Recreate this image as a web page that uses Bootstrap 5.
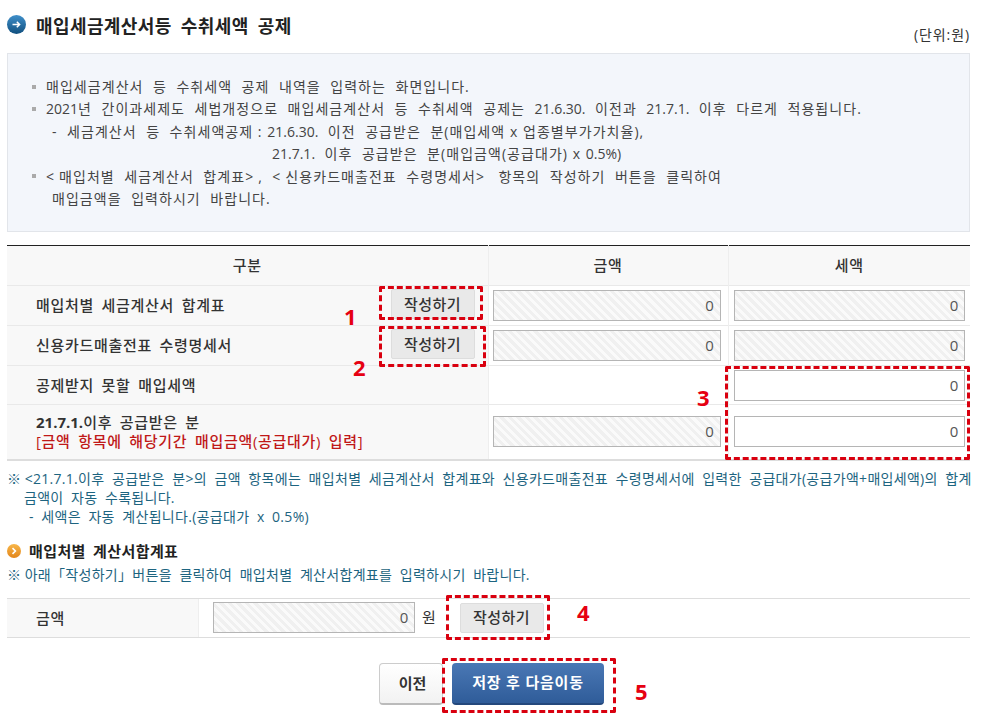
<!DOCTYPE html>
<html lang="ko">
<head>
<meta charset="utf-8">
<title>매입세금계산서등 수취세액 공제</title>
<link href="https://cdn.jsdelivr.net/npm/bootstrap@5.3.0/dist/css/bootstrap.min.css" rel="stylesheet">
<style>
html,body{height:724px;overflow:hidden}
body{font-family:"Open Sans","Noto Sans CJK KR","Liberation Sans",sans-serif;font-size:15px;letter-spacing:.7px;word-spacing:3px;color:#333;background:#fff}
.pg{position:relative;width:963px;margin-left:7px;height:724px}
.ttl-row{height:53px;padding-top:15px}
.ttl{font-size:18px;font-weight:700;color:#222;line-height:22px;margin:0 0 0 10px;letter-spacing:.4px;word-spacing:4px}
.unit{font-size:14px;line-height:18px;padding-top:11px;letter-spacing:.9px}
.infobox{height:179px;background:#f3f6fb;border:1px solid #e2e5ea;padding:22px 0 0 24px;line-height:22.4px;color:#444;font-size:14px;letter-spacing:1.05px;word-spacing:4.8px}
.infoline{white-space:nowrap}
.ind1{padding-left:20px}
.ind2{padding-left:240px}
.ind3{padding-left:20px}
.ang{letter-spacing:5px}
.ltn{letter-spacing:0}
.tsp{word-spacing:0}
.sq{display:inline-block;width:4px;height:4px;background:#aaa;margin:0 10px 3px 0;vertical-align:middle}
.gtbl{width:963px;table-layout:fixed;margin-top:13px;border-collapse:collapse;border-top:1px solid #222;border-bottom:2px solid #ddd}
.gtbl th{height:40px;background:#f8f8f8;font-weight:500;text-align:center;color:#333;border-left:1px solid #eee}
.gtbl th:first-child,.gtbl td:first-child{border-left:0}
.gtbl td{border-top:1px solid #e9e9e9;border-left:1px solid #eee;padding:0 5px 0 5px;height:40px}
.gtbl td:nth-child(2){padding:0 7px 0 4px}
.gtbl td.lb{background:#f8f8f8;padding-left:29px;line-height:19px;font-weight:500;color:#333}
.gtbl td.lbw{background:#fff}
.r1 td{height:39px}
.r2 td{height:55px}
.wb{font-weight:700;letter-spacing:0}
.redt{color:#c01818;font-weight:500}
.amt{display:block;height:31px;width:100%;border:1px solid #b5b5b5;text-align:right;padding:0 5px 0 0;line-height:29px;color:#555;background:#fff;border-radius:0}
.hatch{background:repeating-linear-gradient(45deg,#f0f0f0 0,#f0f0f0 3px,#fafafa 3px,#fafafa 6px)}
.wr-btn{width:84px;height:30px;background:#e9e9e9;border:1px solid #ddd;border-radius:2px;font-size:15px;letter-spacing:.4px;color:#333;padding:0;line-height:27px;font-weight:500}
.cellbtn{display:flex;justify-content:flex-end;margin-top:-3px}
.teal{color:#1d6480;font-size:14px;line-height:19px;letter-spacing:.3px;word-spacing:3.6px}
.kome{word-spacing:0;letter-spacing:0}
.nt{margin-top:8px;height:57px}
.ntline{white-space:nowrap}
.nti1{padding-left:17px}
.nti2{padding-left:22px}
.sub{font-weight:700;color:#222;line-height:20px;margin-top:15px;letter-spacing:.4px}
.note2{margin-top:4px;line-height:19px}
.stbl{height:40px;margin-top:14px;border-top:1px solid #ddd;border-bottom:1px solid #ddd}
.stbl-lab{width:192px;background:#f8f8f8;padding-left:29px;line-height:38px;font-weight:500;border-right:1px solid #eee}
.smallamt{width:202px;margin-left:14px}
.won{margin:0 23px 0 7px}
.actions{margin-top:25px;gap:9px;padding-left:372px}
.pv{width:64px;height:42px;background:linear-gradient(#fff,#f2f2f2);border:1px solid #ccc;border-bottom:2px solid #bbb;border-radius:4px;font-weight:700;color:#333;font-size:15px;padding:0 0 0 3px}
.nx{width:152px;height:42px;background:linear-gradient(#4a78b5,#2f5c99);border:0;border-bottom:2px solid #24487c;border-radius:4px;font-weight:700;color:#fff;font-size:15px;padding:0;letter-spacing:.8px}
.anno{position:absolute;border:3px dashed #d9000f;border-radius:2px;pointer-events:none}
.anum{position:absolute;color:#e60012;font-weight:700;font-size:22px;line-height:24px;letter-spacing:0}
.a1{left:372px;top:286px;width:104px;height:34px}
.a2{left:372px;top:326px;width:107px;height:41px}
.a3{left:718px;top:366px;width:245px;height:94px}
.a4{left:439px;top:595px;width:104px;height:45px}
.a5{left:435px;top:658px;width:174px;height:55px}
.n1{left:337px;top:304px}.n2{left:346px;top:355px}.n3{left:690px;top:385px}.n4{left:570px;top:600px}.n5{left:628px;top:679px}
</style>
</head>
<body>
<div class="pg">
  <div class="ttl-row d-flex justify-content-between">
    <div class="d-flex align-items-start">
      <svg width="19" height="19" viewBox="0 0 19 19"><defs><linearGradient id="bg" x1="0" y1="0" x2="0" y2="1"><stop offset="0" stop-color="#3f8fca"/><stop offset="1" stop-color="#11507f"/></linearGradient></defs><circle cx="9.5" cy="9.5" r="9.5" fill="url(#bg)"/><path d="M5.5 9.5h7M9.8 6.8l2.8 2.7-2.8 2.7" stroke="#fff" stroke-width="1.5" fill="none"/></svg>
      <h1 class="ttl">매입세금계산서등 수취세액 공제</h1>
    </div>
    <div class="unit">(단위:원)</div>
  </div>
  <div class="infobox">
    <div class="infoline"><span class="sq"></span>매입세금계산서 등 수취세액 공제 내역을 입력하는 화면입니다.</div>
    <div class="infoline"><span class="sq"></span><span class="ltn">2021</span>년 간이과세제도 세법개정으로 매입세금계산서 등 수취세액 공제는 <span class="ltn">21.6.30.</span> 이전과 <span class="ltn">21.7.1.</span> 이후 다르게 적용됩니다.</div>
    <div class="infoline ind1">- 세금계산서 등 수취세액공제<span class="tsp"> : </span><span class="ltn">21.6.30.</span> 이전 공급받은 분(매입세액<span class="tsp"> x </span>업종별부가가치율),</div>
    <div class="infoline ind2"><span class="ltn">21.7.1.</span> 이후 공급받은 분(매입금액(공급대가)<span class="tsp"> x </span><span class="ltn">0.5%</span>)</div>
    <div class="infoline"><span class="sq"></span><span class="ang">&lt;</span>매입처별 세금계산서 합계표<span class="ang">&gt;</span>, <span class="ang">&lt;</span>신용카드매출전표 수령명세서<span class="ang">&gt;</span> 항목의 작성하기 버튼을 클릭하여</div>
    <div class="infoline ind3">매입금액을 입력하시기 바랍니다.</div>
  </div>
  <table class="gtbl">
    <colgroup><col style="width:481px"><col style="width:240px"><col style="width:242px"></colgroup>
    <thead><tr><th>구분</th><th>금액</th><th>세액</th></tr></thead>
    <tbody>
      <tr><td class="lb"><div class="d-flex justify-content-between align-items-center"><span>매입처별 세금계산서 합계표</span><span class="cellbtn p-0 me-2"><button class="btn wr-btn" type="button">작성하기</button></span></div></td><td><div class="amt hatch">0</div></td><td><div class="amt hatch">0</div></td></tr>
      <tr><td class="lb"><div class="d-flex justify-content-between align-items-center"><span>신용카드매출전표 수령명세서</span><span class="cellbtn p-0 me-2"><button class="btn wr-btn" type="button">작성하기</button></span></div></td><td><div class="amt hatch">0</div></td><td><div class="amt hatch">0</div></td></tr>
      <tr class="r1"><td class="lb">공제받지 못할 매입세액</td><td class="lbw"></td><td><div class="amt">0</div></td></tr>
      <tr class="r2"><td class="lb"><span class="wb">21.7.1.</span>이후 공급받은 분<br><span class="redt">[금액 항목에 해당기간 매입금액(공급대가) 입력]</span></td><td><div class="amt hatch">0</div></td><td><div class="amt">0</div></td></tr>
    </tbody>
  </table>
  <div class="teal nt">
    <div class="ntline"><span class="kome">※ </span>&lt;21.7.1.이후 공급받은 분&gt;의 금액 항목에는 매입처별 세금계산서 합계표와 신용카드매출전표 수령명세서에 입력한 공급대가(공급가액+매입세액)의 합계</div>
    <div class="ntline nti1">금액이 자동 수록됩니다.</div>
    <div class="ntline nti2">- 세액은 자동 계산됩니다.(공급대가 x 0.5%)</div>
  </div>
  <div class="sub d-flex align-items-center gap-2">
    <svg width="14" height="14" viewBox="0 0 14 14"><defs><linearGradient id="og" x1="0" y1="0" x2="0" y2="1"><stop offset="0" stop-color="#f8b74a"/><stop offset="1" stop-color="#e2851a"/></linearGradient></defs><circle cx="7" cy="7" r="7" fill="url(#og)"/><path d="M5.5 4.2L8.4 7 5.5 9.8" stroke="#fff" stroke-width="1.6" fill="none"/></svg>
    <span>매입처별 계산서합계표</span>
  </div>
  <div class="teal note2"><span class="kome">※ </span>아래「작성하기」버튼을 클릭하여 매입처별 계산서합계표를 입력하시기 바랍니다.</div>
  <div class="stbl d-flex align-items-center">
    <div class="stbl-lab">금액</div>
    <div class="amt hatch smallamt">0</div>
    <span class="won">원</span>
    <button class="btn wr-btn" type="button">작성하기</button>
  </div>
  <div class="actions d-flex">
    <button class="btn pv" type="button">이전</button>
    <button class="btn nx" type="button">저장 후 다음이동</button>
  </div>
  <div class="anno a1"></div><div class="anno a2"></div><div class="anno a3"></div><div class="anno a4"></div><div class="anno a5"></div>
  <span class="anum n1">1</span><span class="anum n2">2</span><span class="anum n3">3</span><span class="anum n4">4</span><span class="anum n5">5</span>
</div>
<script src="https://cdn.jsdelivr.net/npm/bootstrap@5.3.0/dist/js/bootstrap.bundle.min.js"></script>
</body>
</html>
